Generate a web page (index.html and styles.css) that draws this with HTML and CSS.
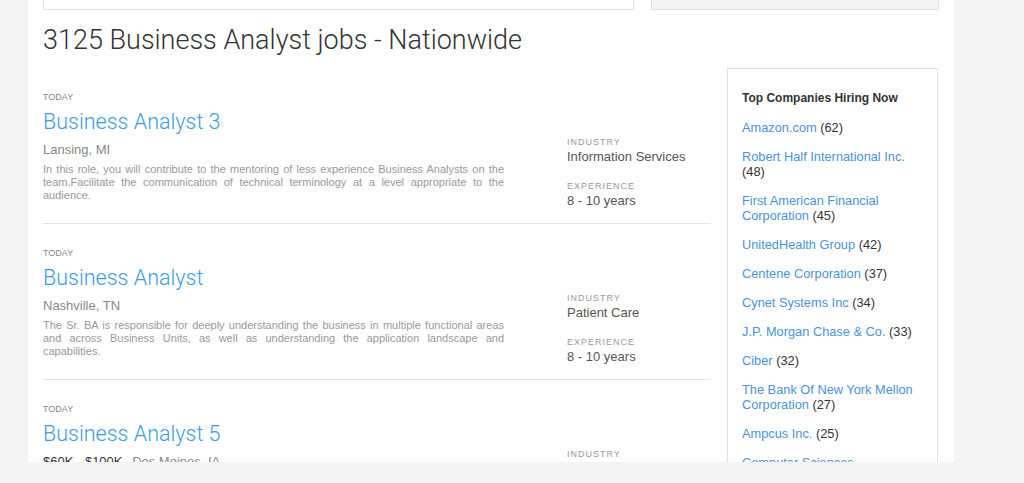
FILE: index.html
```html
<!DOCTYPE html>
<html lang="en">
<head>
    <meta charset="UTF-8">
    <title>Business Analyst jobs - Nationwide</title>
    <link rel="stylesheet" href="styles.css">
</head>
<body>
    <div class="page">
        <div class="top-boxes">
            <div class="search-box"></div>
            <div class="filter-box"></div>
        </div>

        <h1 class="results-title">3125 Business Analyst jobs - Nationwide</h1>

        <div class="content">
            <div class="job-list">
                <div class="job">
                    <div class="job-main">
                        <div class="job-date">TODAY</div>
                        <a class="job-title" href="#">Business Analyst 3</a>
                        <div class="job-location">Lansing, MI</div>
                        <p class="job-desc">In this role, you will contribute to the mentoring of less experience Business Analysts on the team.Facilitate the communication of technical terminology at a level appropriate to the audience.</p>
                    </div>
                    <div class="job-meta">
                        <div class="meta-label">INDUSTRY</div>
                        <div class="meta-value">Information Services</div>
                        <div class="meta-label">EXPERIENCE</div>
                        <div class="meta-value">8 - 10 years</div>
                    </div>
                </div>

                <div class="job">
                    <div class="job-main">
                        <div class="job-date">TODAY</div>
                        <a class="job-title" href="#">Business Analyst</a>
                        <div class="job-location">Nashville, TN</div>
                        <p class="job-desc">The Sr. BA is responsible for deeply understanding the business in multiple functional areas and across Business Units, as well as understanding the application landscape and capabilities.</p>
                    </div>
                    <div class="job-meta">
                        <div class="meta-label">INDUSTRY</div>
                        <div class="meta-value">Patient Care</div>
                        <div class="meta-label">EXPERIENCE</div>
                        <div class="meta-value">8 - 10 years</div>
                    </div>
                </div>

                <div class="job">
                    <div class="job-main">
                        <div class="job-date">TODAY</div>
                        <a class="job-title" href="#">Business Analyst 5</a>
                        <div class="job-location"><span class="salary">$60K - $100K</span> Des Moines, IA</div>
                    </div>
                    <div class="job-meta">
                        <div class="meta-label">INDUSTRY</div>
                        <div class="meta-value">Consulting</div>
                    </div>
                </div>
            </div>

            <div class="sidebar">
                <h3>Top Companies Hiring Now</h3>
                <ul class="company-list">
                    <li><a href="#">Amazon.com</a> (62)</li>
                    <li><a href="#">Robert Half International Inc.</a> (48)</li>
                    <li><a href="#">First American Financial Corporation</a> (45)</li>
                    <li><a href="#">UnitedHealth Group</a> (42)</li>
                    <li><a href="#">Centene Corporation</a> (37)</li>
                    <li><a href="#">Cynet Systems Inc</a> (34)</li>
                    <li><a href="#">J.P. Morgan Chase &amp; Co.</a> (33)</li>
                    <li><a href="#">Ciber</a> (32)</li>
                    <li><a href="#">The Bank Of New York Mellon Corporation</a> (27)</li>
                    <li><a href="#">Ampcus Inc.</a> (25)</li>
                    <li><a href="#">Computer Sciences Corporation</a> (24)</li>
                </ul>
            </div>
        </div>
    </div>
</body>
</html>
```

FILE: styles.css
```css
* {
    box-sizing: border-box;
    margin: 0;
    padding: 0;
}

body {
    font-family: "Liberation Sans", Arial, sans-serif;
    background: #f4f4f4;
    color: #333;
    overflow: hidden;
}

a {
    text-decoration: none;
}

.page {
    width: 926px;
    height: 462px;
    margin-left: 28px;
    padding: 0 15px;
    background: #fff;
    overflow: hidden;
}

.top-boxes {
    display: flex;
    gap: 17px;
}

.search-box {
    width: 591px;
    height: 10px;
    border: 1px solid #e2e2e2;
    border-top: none;
    background: #fff;
}

.filter-box {
    width: 288px;
    height: 10px;
    border: 1px solid #e2e2e2;
    border-top: none;
    background: #f5f5f5;
}

.results-title {
    margin-top: 14px;
    font-family: Roboto, "Liberation Sans", sans-serif;
    font-size: 27px;
    line-height: 32px;
    font-weight: 300;
    color: #333;
}

.content {
    display: flex;
    gap: 16px;
    margin-top: 12px;
}

.job-list {
    width: 668px;
}

.job {
    display: flex;
    padding: 23px 0 14px;
    border-bottom: 1px solid #e4e4e4;
}

.job-main {
    width: 461px;
}

.job-date {
    font-size: 9px;
    line-height: 12px;
    color: #888;
}

.job-title {
    display: block;
    margin-top: 5px;
    font-family: Roboto, "Liberation Sans", sans-serif;
    font-size: 21.5px;
    line-height: 28px;
    font-weight: 300;
    color: #3b9ce0;
}

.job-location {
    margin-top: 6px;
    font-size: 13px;
    line-height: 16px;
    color: #888;
}

.salary {
    color: #333;
    margin-right: 6px;
}

.job-desc {
    margin-top: 5px;
    font-size: 11px;
    line-height: 13px;
    color: #999;
    text-align: justify;
}

.job-meta {
    margin-left: 63px;
    padding-top: 45px;
}

.meta-label {
    font-size: 9px;
    line-height: 12px;
    letter-spacing: 1px;
    color: #999;
}

.meta-value {
    margin-top: 1px;
    margin-bottom: 15px;
    font-size: 13px;
    line-height: 16px;
    color: #555;
}

.meta-value:last-child {
    margin-bottom: 0;
}

.sidebar {
    width: 211px;
    height: 420px;
    padding: 22px 14px;
    border: 1px solid #e2e2e2;
}

.sidebar h3 {
    font-size: 12px;
    line-height: 15px;
    font-weight: bold;
    color: #333;
}

.company-list {
    list-style: none;
    font-size: 12.8px;
    line-height: 15px;
    color: #333;
}

.company-list li {
    margin-top: 14px;
}

.company-list a {
    color: #4a93d8;
}
```
